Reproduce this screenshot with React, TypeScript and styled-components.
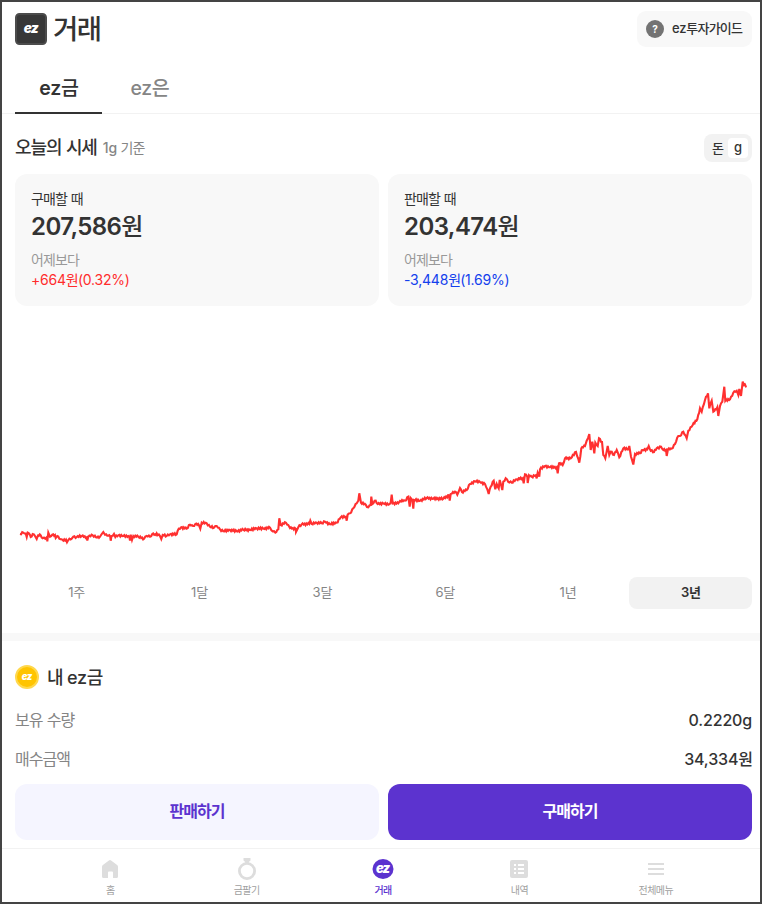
import React from "react";
import styled, { createGlobalStyle } from "styled-components";

const GlobalStyle = createGlobalStyle`
  *, *::before, *::after { box-sizing: border-box; }
  body { margin: 0; background: #fff; }
  button { font: inherit; letter-spacing: inherit; word-spacing: inherit; border: 0; background: none; padding: 0; margin: 0; color: inherit; }
`;

const Frame = styled.div`
  width: 762px;
  height: 904px;
  border: 2px solid #444;
  background: #fff;
  color: #333;
  font-family: Inter, "Noto Sans CJK KR", sans-serif;
  display: flex;
  flex-direction: column;
  overflow: hidden;
`;

const Latin = styled.span`
  letter-spacing: -0.015em;
`;

const Hangul = styled.span`
  letter-spacing: -0.06em;
  word-spacing: 0.04em;
`;

/* Tightens Hangul runs so that they sit evenly beside Latin text. */
function Label({ children }: { children: string }) {
  return (
    <span>
      {children.split(/([\uac00-\ud7a3 ]+)/).map((part, i) =>
        /[\uac00-\ud7a3]/.test(part) ? <Hangul key={i}>{part}</Hangul> : <Latin key={i}>{part}</Latin>
      )}
    </span>
  );
}

const Header = styled.header`
  height: 61px;
  padding: 9px 8px 0 13px;
  display: flex;
  justify-content: space-between;
  align-items: flex-start;
`;

const Brand = styled.h1`
  margin: 2px 0 0;
  display: flex;
  gap: 6px;
  font-size: 27.5px;
  line-height: 32px;
  font-weight: 500;
  svg { display: block; }
`;

const GuideButton = styled.button`
  height: 36px;
  width: 115px;
  padding-left: 9px;
  border-radius: 9px;
  background: #f8f8f8;
  display: flex;
  align-items: center;
  gap: 8px;
  font-size: 13px;
  line-height: 17px;
  font-weight: 500;
  white-space: nowrap;
  > span { padding-bottom: 2px; }
`;

const HelpMark = styled.i`
  width: 18px;
  height: 18px;
  border-radius: 50%;
  background: #737373;
  color: #fff;
  font: 700 10px/18px Inter, sans-serif;
  text-align: center;
`;

const Tabs = styled.nav`
  height: 51px;
  padding-left: 13px;
  border-bottom: 1px solid #f2f2f2;
  display: flex;
  gap: 4px;
`;

const Tab = styled.button<{ $active?: boolean }>`
  height: 51px;
  width: 87px;
  padding-top: 2px;
  font-size: 19.5px;
  line-height: 47px;
  font-weight: ${(p) => (p.$active ? 600 : 500)};
  color: ${(p) => (p.$active ? "#333" : "#858585")};
  border-bottom: 2px solid ${(p) => (p.$active ? "#333" : "transparent")};
  ${Hangul} { font-weight: 500; }
`;

const PriceHeading = styled.div`
  height: 60px;
  padding: 20px 8px 0 13px;
  display: flex;
  justify-content: space-between;
`;

const PriceTitle = styled.h2`
  margin: 0;
  font-size: 18px;
  line-height: 28px;
  font-weight: 500;
  display: flex;
  gap: 6px;
  small { font-size: 14px; line-height: 27px; font-weight: 400; color: #858585; }
  small ${Latin} { font-weight: 500; }
`;

const UnitSwitch = styled.div`
  width: 48px;
  height: 28px;
  padding: 4px;
  border-radius: 8px;
  background: #f2f2f2;
  display: flex;
`;

const Unit = styled.button<{ $active?: boolean }>`
  width: 20px;
  height: 20px;
  border-radius: 4px;
  font-size: 13px;
  line-height: ${(p) => (p.$active ? 17 : 18)}px;
  padding-bottom: ${(p) => (p.$active ? 2 : 0)}px;
  font-weight: 500;
  background: ${(p) => (p.$active ? "#fff" : "transparent")};
`;

const PriceCards = styled.div`
  margin: 0 8px 0 13px;
  display: grid;
  grid-template-columns: 1fr 1fr;
  gap: 9px;
`;

const PriceCard = styled.section`
  height: 132px;
  padding: 15px 16px;
  border-radius: 12px;
  background: #f8f8f8;
  font-size: 14px;
  line-height: 20px;
`;

const Price = styled.div`
  font-size: 24px;
  line-height: 36px;
  font-weight: 600;
  ${Latin} { letter-spacing: -0.024em; }
  ${Hangul} { font-weight: 500; }
`;

const Muted = styled.div`
  margin-top: 5px;
  color: #999;
`;

const Change = styled.div<{ $up?: boolean }>`
  color: ${(p) => (p.$up ? "#ff2c2c" : "#1340ed")};
`;

const ChartArea = styled.div`
  height: 271px;
  svg { display: block; }
`;

const Periods = styled.div`
  height: 32px;
  margin: 0 8px 24px 13px;
  display: grid;
  grid-template-columns: repeat(6, 1fr);
`;

const Period = styled.button<{ $active?: boolean }>`
  border-radius: 8px;
  font-size: 13px;
  line-height: 30px;
  padding-bottom: 2px;
  background: ${(p) => (p.$active ? "#f2f2f2" : "transparent")};
  color: ${(p) => (p.$active ? "#333" : "#858585")};
  font-weight: ${(p) => (p.$active ? 600 : 400)};
`;

const Divider = styled.div`
  height: 8px;
  background: #f8f8f8;
`;

const Holdings = styled.section`
  height: 143px;
  padding: 24px 8px 0 13px;
`;

const HoldingsTitle = styled.h2`
  margin: 0 0 19px;
  height: 24px;
  display: flex;
  gap: 8px;
  font-size: 18px;
  line-height: 26px;
  font-weight: 500;
  svg { display: block; }
`;

const HoldingRow = styled.div`
  height: 24px;
  margin-bottom: 15px;
  display: flex;
  justify-content: space-between;
  font-size: 16px;
  line-height: 24px;
  color: #858585;
  strong { font-weight: 500; color: #333; }
  strong ${Latin} { letter-spacing: -0.01em; }
`;

const Actions = styled.div`
  height: 64px;
  padding: 0 8px 8px 13px;
  display: grid;
  grid-template-columns: 1fr 1fr;
  gap: 9px;
`;

const Action = styled.button<{ $primary?: boolean }>`
  border-radius: 12px;
  font-size: 16px;
  line-height: 52px;
  padding-bottom: 2px;
  font-weight: 600;
  background: ${(p) => (p.$primary ? "#5c33cf" : "#f5f5ff")};
  color: ${(p) => (p.$primary ? "#fff" : "#5c33cf")};
`;

const BottomNav = styled.nav`
  height: 54px;
  padding: 8px 36px 0 40px;
  border-top: 1px solid #f2f2f2;
  display: grid;
  grid-template-columns: repeat(5, 1fr);
`;

const NavItem = styled.button<{ $active?: boolean }>`
  display: flex;
  flex-direction: column;
  align-items: center;
  justify-content: flex-start;
  gap: 2px;
  font-size: 10px;
  line-height: 14px;
  font-weight: ${(p) => (p.$active ? 500 : 400)};
  color: ${(p) => (p.$active ? "#5c33cf" : "#a0a0a0")};
  svg { display: block; }
`;

function EzMark({ cx, cy, size, color = "#fff" }: { cx: number; cy: number; size: number; color?: string }) {
  return (
    <text
      x={cx}
      y={cy}
      textAnchor="middle"
      fontFamily="Inter, sans-serif"
      fontWeight="900"
      fontStyle="italic"
      fontSize={size}
      letterSpacing={-size * 0.06}
      fill={color}
    >
      ez
    </text>
  );
}

const prices: [number, number][] = [
  [20, 534], [23.3, 532.7], [25.7, 533.5], [26.7, 537], [27.7, 532.7], [30, 535], [30.7, 537], [32.7, 534], [35, 536], [36.7, 539],
  [38, 535.5], [40.7, 535.3], [42.7, 538.3], [45.3, 538.7], [47, 537], [47.3, 541.5], [48.3, 532.7], [50, 536.7], [52.3, 534.7],
  [55, 535], [55.7, 538], [57.3, 536], [59.3, 538.7], [61.7, 539.3], [63.3, 540.7], [66, 539.5], [67, 542.3], [68.3, 540],
  [71.7, 538.7], [73.3, 536.7], [76.7, 537], [81.7, 536], [86.7, 537.3], [87.3, 540.5], [88.3, 536.7], [92.7, 535.3], [96, 537.3],
  [100, 536.7], [101.7, 534], [103.3, 532], [105, 534.7], [108.3, 535.7], [110.2, 536.5], [110.7, 540.7], [111.5, 536], [114, 534],
  [115.3, 537], [118.3, 535.3], [123.3, 536], [129.3, 536.7], [130, 540.5], [130.7, 534.7], [132, 540], [133.3, 536], [138.3, 536.7],
  [144, 538.7], [146.7, 536], [150, 536.7], [152.3, 534], [156, 535], [156.7, 533.3], [160, 536], [161.3, 539], [162.7, 535],
  [166.7, 536], [170, 534.3], [176.7, 534.3], [177.7, 530.7], [181, 527.3], [186.7, 528.7], [190, 524.7], [193, 526], [195.3, 524],
  [199, 525.3], [200.3, 528.7], [201.7, 522.7], [206.7, 523.3], [210, 526.7], [214, 527.7], [216.7, 526], [220, 529.3], [223.3, 531.3],
  [230, 530], [236.7, 531.3], [243.3, 529.7], [250, 530], [256.7, 528.3], [263.3, 528.7], [270, 527.7], [272.7, 531.3], [275.3, 532.7],
  [278.3, 529.3], [279.3, 518.3], [280.7, 525], [286, 522.7], [288.3, 525], [290, 528], [295.7, 528.7], [296, 532], [298.3, 527.3],
  [301.7, 524.3], [309.3, 524], [310.3, 520.7], [311.7, 524], [316.7, 522.7], [321.7, 523.3], [325, 521.7], [330, 524.3], [336.7, 522.7],
  [340.7, 517.3], [346, 516.7], [346.7, 520.7], [347.7, 514.5], [350, 513.3], [353.3, 508.3], [356.7, 503.3], [358.3, 500.7],
  [359.3, 493.3], [361, 502.7], [365.7, 504.7], [368.3, 507.3], [370.7, 505], [371.3, 496.7], [372.3, 504], [375.7, 500.7],
  [377.7, 504], [383.3, 503.3], [388.3, 504.7], [390.7, 502.7], [391.7, 494.7], [392.7, 503.3], [398.3, 503.3], [400, 501], [405, 500.7],
  [408.3, 496.7], [409.7, 506.7], [410.7, 498], [412.3, 500], [413.3, 508.7], [414, 500], [420, 500.7], [426.7, 498], [433.3, 498.7],
  [443.3, 498.7], [449, 495.3], [449.7, 500.7], [450.7, 494], [455, 491.7], [457.3, 494.7], [460, 488], [462, 492], [466.7, 490],
  [470, 484], [475, 481.3], [480, 482], [485, 484], [487.3, 489.3], [488.7, 494], [490.7, 486.7], [493.7, 480.7], [495.3, 489.3],
  [496.7, 484], [498.7, 488.3], [499.7, 480], [502.3, 490], [503.3, 481.7], [505.7, 478.3], [508.3, 482], [511.7, 482.7], [516.7, 479.3],
  [522.7, 478.3], [523.7, 483.3], [525, 474.3], [527.3, 476.7], [527.7, 483], [529, 475.3], [531.7, 476.7], [535.7, 475.3],
  [536.7, 478.3], [537.7, 472.7], [539.3, 476.7], [540, 469.3], [545, 466], [550, 467.3], [556.7, 467.3], [557.7, 473.3], [559, 463.3],
  [562.7, 465], [565, 458.3], [570.7, 458.3], [576, 452], [579.3, 462.7], [581.3, 448.3], [585, 446], [586.7, 440.7], [589.3, 434],
  [590.7, 450], [592.3, 441.7], [594.3, 453.3], [595.3, 442.7], [597.7, 446], [599, 438.3], [602, 442], [603.3, 455], [605.3, 458.3],
  [607.7, 446], [609.3, 455], [610.7, 451.7], [614, 455], [616.7, 450], [619.3, 457.3], [623.3, 448.3], [628.3, 449.3], [629.3, 446],
  [631, 456.7], [633.3, 464.5], [635, 454], [640, 453.3], [642.7, 450], [647.3, 449.3], [648.7, 446], [650.7, 450.7], [654, 452],
  [656.7, 448.3], [661, 446.7], [663.3, 450], [666, 450], [666.7, 456], [668, 449.3], [671.7, 448.7], [675, 444], [678.3, 436],
  [680, 436], [683.3, 431.7], [686.7, 438.3], [688.3, 430.7], [692.7, 425], [697.3, 419.3], [700, 408.3], [701.7, 411.7], [705, 400],
  [708, 393.3], [709.3, 408.3], [711.7, 400.7], [713.3, 411.7], [717.3, 407.3], [718.3, 416], [720, 406], [722.3, 401.7],
  [724.3, 386.7], [725.3, 400.7], [730, 399.3], [733.3, 392.7], [736.7, 390.7], [738.3, 395], [739.3, 389], [741, 396], [742.7, 381.7],
  [744, 385], [746.7, 386],
];

function pricePath() {
  const wave = [0.7, -0.9, 0.4, -0.5, 1, -0.7, 0.3, -1];
  const out: string[] = [];
  let n = 0;
  prices.forEach(([x, y], i) => {
    out.push(`${x},${y}`);
    const next = prices[i + 1];
    if (!next) return;
    const steps = Math.floor((next[0] - x) / 0.9);
    for (let k = 1; k < steps; k++) {
      const t = k / steps;
      const px = x + (next[0] - x) * t;
      const py = y + (next[1] - y) * t + wave[n++ % wave.length];
      out.push(`${px.toFixed(1)},${py.toFixed(1)}`);
    }
  });
  return out.join(" ");
}

export default function App() {
  return (
    <>
      <GlobalStyle />
      <Frame>
        <Header>
          <Brand>
            <svg width="32" height="34" viewBox="0 0 32 34">
              <rect x="1" y="1" width="30" height="30" rx="3.5" fill="#383838" stroke="#4c4c4c" strokeWidth="2" />
              <EzMark cx={15.8} cy={20} size={13.5} />
            </svg>
            <Label>거래</Label>
          </Brand>
          <GuideButton>
            <HelpMark>?</HelpMark>
            <Label>ez투자가이드</Label>
          </GuideButton>
        </Header>
        <Tabs>
          <Tab $active><Label>ez금</Label></Tab>
          <Tab><Label>ez은</Label></Tab>
        </Tabs>
        <PriceHeading>
          <PriceTitle>
            <Label>오늘의 시세</Label>
            <small><Label>1g 기준</Label></small>
          </PriceTitle>
          <UnitSwitch>
            <Unit>돈</Unit>
            <Unit $active>g</Unit>
          </UnitSwitch>
        </PriceHeading>
        <PriceCards>
          <PriceCard>
            <Label>구매할 때</Label>
            <Price><Label>207,586원</Label></Price>
            <Muted><Label>어제보다</Label></Muted>
            <Change $up><Label>+664원(0.32%)</Label></Change>
          </PriceCard>
          <PriceCard>
            <Label>판매할 때</Label>
            <Price><Label>203,474원</Label></Price>
            <Muted><Label>어제보다</Label></Muted>
            <Change><Label>-3,448원(1.69%)</Label></Change>
          </PriceCard>
        </PriceCards>
        <ChartArea>
          <svg width="758" height="271" viewBox="2 306 758 271">
            <polyline points={pricePath()} fill="none" stroke="#ff3030" strokeWidth="2.1" strokeLinejoin="miter" strokeMiterlimit="4" />
          </svg>
        </ChartArea>
        <Periods>
          {["1주", "1달", "3달", "6달", "1년", "3년"].map((p) => (
            <Period key={p} $active={p === "3년"}><Label>{p}</Label></Period>
          ))}
        </Periods>
        <Divider />
        <Holdings>
          <HoldingsTitle>
            <svg width="24" height="24" viewBox="0 0 24 24">
              <circle cx="12" cy="12" r="11" fill="#ffc400" stroke="#ffd84d" strokeWidth="2" />
              <EzMark cx={11.8} cy={15} size={9.5} />
            </svg>
            <Label>내 ez금</Label>
          </HoldingsTitle>
          <HoldingRow>
            <Label>보유 수량</Label>
            <strong><Label>0.2220g</Label></strong>
          </HoldingRow>
          <HoldingRow>
            <Label>매수금액</Label>
            <strong><Label>34,334원</Label></strong>
          </HoldingRow>
        </Holdings>
        <Actions>
          <Action><Label>판매하기</Label></Action>
          <Action $primary><Label>구매하기</Label></Action>
        </Actions>
        <BottomNav>
          <NavItem>
            <svg width="24" height="24" viewBox="0 0 24 24" fill="#ddd">
              <path d="M10.9 3.4a1.8 1.8 0 0 1 2.2 0l6 4.6c.6.4.9 1 .9 1.7V19.5a1.5 1.5 0 0 1-1.5 1.5H15v-5.5a1 1 0 0 0-1-1h-3a1 1 0 0 0-1 1V21H5.5A1.5 1.5 0 0 1 4 19.5V9.7C4 9 4.3 8.4 4.9 8z" />
            </svg>
            <Label>홈</Label>
          </NavItem>
          <NavItem>
            <svg width="24" height="24" viewBox="0 0 24 24">
              <circle cx="12" cy="14" r="7.6" fill="none" stroke="#ddd" strokeWidth="2.8" />
              <path d="M8.5 1h7v2.5L13.8 5v2h-3.6V5L8.5 3.5z" fill="#ddd" />
            </svg>
            <Label>금팔기</Label>
          </NavItem>
          <NavItem $active>
            <svg width="24" height="24" viewBox="0 0 24 24">
              <ellipse cx="12" cy="12" rx="10.5" ry="10" fill="#5c33cf" />
              <EzMark cx={11.7} cy={16} size={13} />
            </svg>
            <Label>거래</Label>
          </NavItem>
          <NavItem>
            <svg width="24" height="24" viewBox="0 0 24 24">
              <rect x="3" y="3" width="18" height="18" rx="2" fill="#ddd" />
              <path d="M7 8h2M11 8h6M7 12h2M11 12h6M7 16h2M11 16h6" stroke="#fff" strokeWidth="2" />
            </svg>
            <Label>내역</Label>
          </NavItem>
          <NavItem>
            <svg width="24" height="24" viewBox="0 0 24 24">
              <path d="M4 7h16M4 12h16M4 17h16" stroke="#ddd" strokeWidth="2" />
            </svg>
            <Label>전체메뉴</Label>
          </NavItem>
        </BottomNav>
      </Frame>
    </>
  );
}
